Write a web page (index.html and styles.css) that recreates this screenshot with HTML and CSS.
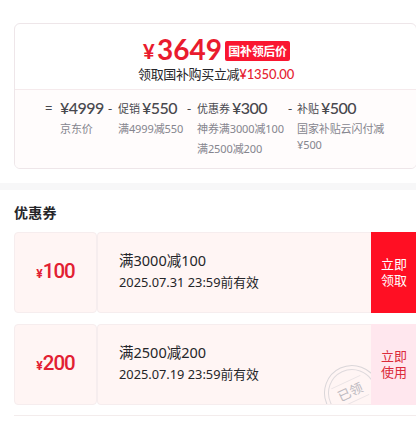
FILE: index.html
```
<!DOCTYPE html>
<html lang="zh-CN">
<head>
<meta charset="utf-8">
<title>优惠券</title>
<link rel="stylesheet" href="styles.css">
</head>
<body>
<section class="price-card">
  <div class="summary">
    <div class="final"><span class="yen">¥</span><span class="amount">3649</span><span class="tag">国补领后价</span></div>
    <div class="saving"><span>领取国补购买立减</span><b>¥1350.00</b></div>
  </div>
  <div class="formula">
    <span class="op">=</span>
    <div class="part"><div class="value"><b>¥4999</b></div><p>京东价</p></div>
    <span class="op">-</span>
    <div class="part"><div class="value"><span>促销</span><b>¥550</b></div><p>满4999减550</p></div>
    <span class="op">-</span>
    <div class="part"><div class="value"><span>优惠券</span><b>¥300</b></div><p>神券满3000减100</p><p>满2500减200</p></div>
    <span class="op">-</span>
    <div class="part"><div class="value"><span>补贴</span><b>¥500</b></div><p>国家补贴云闪付减<br>¥500</p></div>
  </div>
</section>
<div class="band"></div>
<section class="coupons">
  <h2>优惠券</h2>
  <article class="coupon">
    <div class="face"><small>¥</small>100</div>
    <div class="detail"><div class="rule">满3000减100</div><div class="date">2025.07.31 23:59前有效</div></div>
    <div class="action">立即<br>领取</div>
  </article>
  <article class="coupon used">
    <div class="face"><small>¥</small>200</div>
    <div class="detail">
      <div class="rule">满2500减200</div><div class="date">2025.07.19 23:59前有效</div>
      <div class="stamp"><span>已领</span></div>
    </div>
    <div class="action">立即<br>使用</div>
  </article>
</section>
</body>
</html>
```
FILE: styles.css
```
* { box-sizing: border-box; }
body {
  margin: 0;
  padding-top: 23px;
  width: 416px;
  height: 425px;
  overflow: hidden;
  background: #fff;
  color: #252529;
  font-family: "Noto Sans", "Noto Sans CJK SC", sans-serif;
}
p, h2 { margin: 0; }
.price-card {
  margin-left: 14px;
  width: 403px;
  height: 146px;
  border: 1px solid #eee6e9;
  border-radius: 6px;
  overflow: hidden;
}
.summary { height: 65px; padding-top: 10px; }
.final { display: flex; height: 30px; margin-left: 128px; color: #e91b2e; font-family: Lato, sans-serif; font-weight: 700; white-space: nowrap; }
.yen { width: 14px; font-size: 20px; line-height: 34px; font-weight: 900; }
.amount { width: 68px; font-size: 28px; line-height: 31px; }
.tag {
  width: 65px;
  height: 20px;
  margin-top: 7px;
  border-radius: 2px;
  background: #fa1630;
  color: #fff;
  font: 700 12px/19px "Noto Sans CJK SC", sans-serif;
  letter-spacing: -.3px;
  text-align: center;
}
.saving { display: flex; margin-left: 123px; font-size: 13px; line-height: 20px; letter-spacing: -.35px; white-space: nowrap; }
.saving b { font-family: Lato, sans-serif; color: #e51e32; font-weight: 500; letter-spacing: -.1px; }
.formula {
  display: grid;
  grid-template-columns: 15px 43px 15px 64px 15px 86px 14px 100px;
  height: 80px;
  padding: 8px 0 0 30px;
  border-top: 1px solid #f5eaec;
  background: #fffcfc;
  white-space: nowrap;
}
.op { font-size: 13px; line-height: 20px; color: #48484e; }
.op:not(:first-child) { padding-left: 5px; }
.value { display: flex; gap: 2px; height: 20px; margin-bottom: 3px; line-height: 21px; font-size: 11px; color: #48484e; }
.value b { font-family: Lato, sans-serif; font-size: 16px; font-weight: 500; line-height: 19px; letter-spacing: -.5px; }
.part p { font-size: 11px; line-height: 16px; letter-spacing: -.1px; color: #85858e; }
.part p + p { margin-top: 4px; }
.band { height: 7px; margin-top: 14px; background: #f7f7f8; }
.coupons { margin-left: 14px; border-bottom: 1px solid #f3ecec; height: 226px; }
h2 { height: 42px; padding-top: 12px; font-size: 14px; line-height: 22px; font-weight: 700; letter-spacing: .3px; }
.coupon { display: flex; height: 81px; margin-bottom: 11px; }
.face, .detail { border: 1px solid #f6edee; background: #fff5f4; border-radius: 4px; }
.face { width: 83px; display: flex; justify-content: center; align-items: baseline; color: #e22032; font: 500 20.5px/77px Roboto, sans-serif; letter-spacing: -1px; }
.face small { font-size: 12px; font-weight: 700; margin-right: 1px; }
.detail { position: relative; overflow: hidden; width: 274px; padding: 15px 0 0 21px; border-right: 0; border-radius: 4px 0 0 4px; }
.rule { font-size: 14.5px; line-height: 24px; }
.date { font-size: 12.8px; line-height: 20px; }
.action { width: 45px; padding: 24px 0 0 10px; background: #ff0f23; color: #fff; font-size: 13px; line-height: 16px; }
.used .action { background: #ffe7ee; color: #db2b3b; }
.stamp {
  position: absolute;
  left: 226px;
  top: 40px;
  width: 56px;
  height: 56px;
  border: 1.5px solid #dad6d9;
  outline: 1px solid #dfdadd;
  outline-offset: -5px;
  border-radius: 50%;
  display: flex;
  align-items: center;
  justify-content: center;
  transform: rotate(-25deg);
}
.stamp span { margin: 0 2px 5px 0; border: solid #eae3e5; border-width: 1px 0; width: 32px; text-align: center; font-size: 13px; line-height: 20px; color: #bdbac1; }
```
